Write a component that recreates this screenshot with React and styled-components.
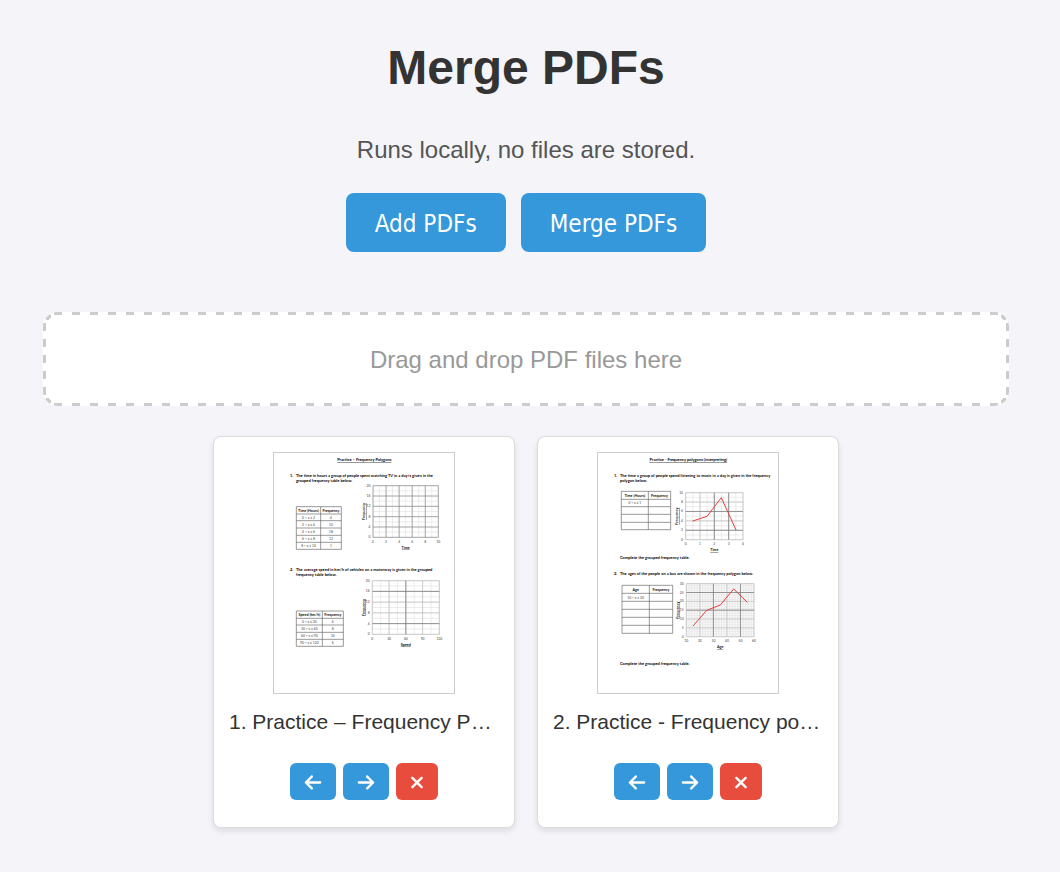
import React from "react";
import styled, { createGlobalStyle } from "styled-components";
import { FaArrowLeft, FaArrowRight, FaXmark } from "react-icons/fa6";

const GlobalStyle = createGlobalStyle`
  *, *::before, *::after { box-sizing: border-box; }
  body {
    margin: 0;
    background: #f4f4f9;
    color: #333;
    font-family: "Liberation Sans", Arial, sans-serif;
  }
`;

const Page = styled.main`
  display: flex;
  flex-direction: column;
  padding: 40px 51px 40px 43px;
`;

const Title = styled.h1`
  margin: 0 0 40px;
  font-size: 48px;
  line-height: 56px;
  text-align: center;
`;

const Tagline = styled.p`
  margin: 0 0 29px;
  color: #555;
  font-size: 24px;
  line-height: 28px;
  text-align: center;
`;

const Toolbar = styled.div`
  display: flex;
  justify-content: center;
  gap: 15px;
  margin-bottom: 60px;
`;

const Button = styled.button`
  display: inline-flex;
  align-items: center;
  justify-content: center;
  border: 0;
  color: #fff;
  background: ${(p) => (p.$danger ? "#e74c3c" : "#3498db")};
  cursor: pointer;
`;

const ActionButton = styled(Button)`
  padding: 15px 29px 11px;
  border-radius: 8px;
  font-family: "DejaVu Sans Condensed", Tahoma, "Noto Sans", sans-serif;
  font-size: 24px;
  line-height: 33px;
`;

/* One dash in the middle of a rounded corner: a wedge with its inner part covered. */
const cornerDash = (x, y, angle) => {
  const centre = `${x === "left" ? "100%" : "0%"} ${y === "top" ? "100%" : "0%"}`;
  return `
    radial-gradient(circle at ${centre}, #fff 12px, transparent 12px) ${x} ${y} / 15px 15px no-repeat,
    conic-gradient(from ${angle - 12}deg at ${centre}, #ccc 24deg, transparent 24deg) ${x} ${y} / 15px 15px no-repeat`;
};

const acrossDashes = (y) =>
  `linear-gradient(90deg, #ccc 8px, transparent 8px) 11px ${y} / 18px 3px repeat-x`;
const downDashes = (x) =>
  `linear-gradient(#ccc 8px, transparent 8px) ${x} 11px / 3px 16px repeat-y`;

const DropZone = styled.div`
  margin-bottom: 30px;
  padding: 34px 33px 32px;
  border-radius: 15px;
  background:
    ${cornerDash("left", "top", 315)},
    ${cornerDash("right", "top", 45)},
    ${cornerDash("right", "bottom", 135)},
    ${cornerDash("left", "bottom", 225)},
    ${acrossDashes("top")},
    ${acrossDashes("bottom")},
    ${downDashes("left")},
    ${downDashes("right")},
    #fff;
  color: #999;
  font-size: 24px;
  line-height: 28px;
  text-align: center;
`;

const FileList = styled.ul`
  display: flex;
  flex-wrap: wrap;
  justify-content: center;
  gap: 22px;
  margin: 0;
  padding: 0;
  list-style: none;
`;

const Card = styled.li`
  display: flex;
  flex-direction: column;
  align-items: center;
  width: 302px;
  padding: 15px 15px 27px;
  border: 1px solid #ddd;
  border-radius: 8px;
  background: #fff;
  box-shadow: 0 3px 6px rgba(0, 0, 0, 0.1);
`;

const Preview = styled.svg`
  display: block;
  width: 182px;
  height: 242px;
  border: 1px solid #ccc;
  font-family: Lato, sans-serif;
`;

const FileName = styled.div`
  width: 100%;
  margin: 16px 0 29px;
  overflow: hidden;
  font-size: 21px;
  line-height: 24px;
  text-overflow: ellipsis;
  white-space: nowrap;
`;

const Controls = styled.div`
  display: flex;
  gap: 7px;
`;

const IconButton = styled(Button)`
  padding: 10px 14px 8px;
  border-radius: 6px;
  svg {
    display: block;
    width: ${(p) => (p.$danger ? 14 : 18)}px;
    height: 19px;
  }
`;

const PlainText = styled.text`
  fill: #000;
  font-size: 12px;
  font-weight: 700;
`;

const SmallText = styled.text`
  fill: ${(p) => (p.$bold ? "#111" : "#444")};
  font-size: ${(p) => (p.$bold ? 11 : 10)}px;
  font-weight: ${(p) => (p.$bold ? 700 : 400)};
  text-anchor: ${(p) => p.$anchor || "middle"};
`;

function Grid({ cols, rows, cells }) {
  return (
    <g>
      <g stroke="#666" strokeWidth="2">
        {rows.map((y) => (
          <line key={y} x1={cols[0]} x2={cols[2]} y1={y} y2={y} />
        ))}
        {cols.map((x) => (
          <line key={x} x1={x} x2={x} y1={rows[0]} y2={rows[rows.length - 1]} />
        ))}
      </g>
      {cells.map((pair, r) =>
        pair.map((value, c) => (
          <SmallText
            key={`${r}-${c}`}
            $bold={r === 0}
            x={(cols[c] + cols[c + 1]) / 2}
            y={(rows[r] + rows[r + 1]) / 2 + 4}
          >
            {value}
          </SmallText>
        ))
      )}
    </g>
  );
}

function Chart({ box, xTicks, yTicks, split, darkX = [], darkY = [], majorColor, label, points }) {
  const [x0, y0, x1, y1] = box;
  const nx = xTicks.length - 1;
  const ny = yTicks.length - 1;
  const px = (i, n) => x0 + ((x1 - x0) * i) / n;
  const py = (i, n) => y0 + ((y1 - y0) * i) / n;
  const series = (n) => Array.from({ length: n + 1 }, (_, i) => i);
  const lines = (n, m, color, width, onlyX, onlyY) => (
    <g stroke={color} strokeWidth={width}>
      {series(n).filter((i) => !onlyX || onlyX.includes(i)).map((i) => (
        <line key={`x${i}`} x1={px(i, n)} x2={px(i, n)} y1={y0} y2={y1} />
      ))}
      {series(m).filter((i) => !onlyY || onlyY.includes(i)).map((i) => (
        <line key={`y${i}`} x1={x0} x2={x1} y1={py(i, m)} y2={py(i, m)} />
      ))}
    </g>
  );
  const midX = (x0 + x1) / 2;
  const midY = (y0 + y1) / 2;
  return (
    <g>
      {lines(nx * split, ny * split, "#e2e2e2", 2)}
      {lines(nx, ny, majorColor, 2)}
      {lines(nx, ny, "#777", 2, darkX, darkY)}
      {points && <polyline points={points} fill="none" stroke="#e83c3c" strokeWidth="3" />}
      {xTicks.map((t, i) => (
        <SmallText key={t} x={px(i, nx)} y={y1 + 17}>{t}</SmallText>
      ))}
      {yTicks.map((t, i) => (
        <SmallText key={t} $anchor="end" x={x0 - 8} y={py(i, ny) + 3}>{t}</SmallText>
      ))}
      <SmallText $bold x={midX} y={y1 + 34} textDecoration="underline">{label}</SmallText>
      <SmallText $bold transform={`translate(${x0 - 23} ${midY}) rotate(-90)`} textDecoration="underline">
        Frequency
      </SmallText>
    </g>
  );
}

function Prompt({ number, y, lines }) {
  return (
    <g>
      <PlainText x="60" y={y}>{`${number}.`}</PlainText>
      {lines.map((line, i) => (
        <PlainText key={line} x="78" y={y + i * 15}>{line}</PlainText>
      ))}
    </g>
  );
}

function PolygonsSheet() {
  return (
    <Preview viewBox="12 15 540 720" role="img" aria-label="Practice – Frequency Polygons">
      <PlainText x="283" y="39" textAnchor="middle" textDecoration="underline">Practice – Frequency Polygons</PlainText>
      <Prompt
        number={1}
        y={87}
        lines={[
          "The time in hours a group of people spent watching TV in a day is given in the",
          "grouped frequency table below.",
        ]}
      />
      <Grid
        cols={[79, 152, 214]}
        rows={[176, 198, 218, 240, 262, 283, 304]}
        cells={[["Time (Hours)", "Frequency"], ["0 < x ≤ 2", 4], ["2 < x ≤ 4", 10], ["4 < x ≤ 6", 18], ["6 < x ≤ 8", 12], ["8 < x ≤ 10", 1]]}
      />
      <Chart box={[309, 113, 505, 268]} xTicks={[0, 2, 4, 6, 8, 10]} yTicks={[20, 16, 12, 8, 4, 0]} split={2} majorColor="#888" label="Time" />
      <Prompt
        number={2}
        y={369}
        lines={[
          "The average speed in km/h of vehicles on a motorway is given in the grouped",
          "frequency table below.",
        ]}
      />
      <Grid
        cols={[79, 157, 220]}
        rows={[489, 511, 531, 553, 574, 595]}
        cells={[["Speed (km/h)", "Frequency"], ["0 < x ≤ 30", 6], ["30 < x ≤ 60", 8], ["60 < x ≤ 90", 14], ["90 < x ≤ 120", 6]]}
      />
      <Chart box={[307, 398, 508, 559]} xTicks={[0, 30, 60, 90, 120]} yTicks={[20, 16, 12, 8, 4, 0]} split={2} majorColor="#bbb" darkX={[2]} darkY={[1, 4]} label="Speed" />
    </Preview>
  );
}

function InterpretingSheet() {
  return (
    <Preview viewBox="12 15 540 720" role="img" aria-label="Practice - Frequency polygons (interpreting)">
      <PlainText x="283" y="39" textAnchor="middle" textDecoration="underline">Practice - Frequency polygons (interpreting)</PlainText>
      <Prompt
        number={1}
        y={87}
        lines={[
          "The time a group of people spend listening to music in a day is given in the frequency",
          "polygon below.",
        ]}
      />
      <Grid
        cols={[82, 163, 230]}
        rows={[130, 154, 176, 199, 223, 245]}
        cells={[["Time (Hours)", "Frequency"], ["0 < x ≤ 1", ""]]}
      />
      <Chart
        box={[275, 134, 447, 275]}
        xTicks={[0, 1, 2, 3, 4]}
        yTicks={[10, 8, 6, 4, 2, 0]}
        split={2}
        majorColor="#bbb"
        darkX={[2, 3]}
        darkY={[2, 4]}
        label="Time"
        points="296,219 339,205 382,149 426,246"
      />
      <PlainText x="78" y="333">Complete the grouped frequency table.</PlainText>
      <Prompt number={2} y={382} lines={["The ages of the people on a bus are shown in the frequency polygon below."]} />
      <Grid
        cols={[84, 166, 236]}
        rows={[412, 436, 460, 484, 508, 532, 556]}
        cells={[["Age", "Frequency"], ["10 < x ≤ 20", ""]]}
      />
      <Chart
        box={[277, 407, 480, 566]}
        xTicks={[10, 20, 30, 40, 50, 60]}
        yTicks={[30, 25, 20, 15, 10, 5, 0]}
        split={5}
        majorColor="#bbb"
        darkX={[2, 4]}
        darkY={[1, 3]}
        label="Age"
        points="297,534 338,487 379,471 419,423 460,463"
      />
      <PlainText x="78" y="652">Complete the grouped frequency table.</PlainText>
    </Preview>
  );
}

const files = [
  { name: "Practice – Frequency Polygons.pdf", Sheet: PolygonsSheet },
  { name: "Practice - Frequency polygons (interpreting).pdf", Sheet: InterpretingSheet },
];

export default function App() {
  return (
    <>
      <GlobalStyle />
      <Page>
        <Title>Merge PDFs</Title>
        <Tagline>Runs locally, no files are stored.</Tagline>
        <Toolbar>
          <ActionButton type="button">Add PDFs</ActionButton>
          <ActionButton type="button">Merge PDFs</ActionButton>
        </Toolbar>
        <DropZone>Drag and drop PDF files here</DropZone>
        <FileList>
          {files.map(({ name, Sheet }, i) => (
            <Card key={name}>
              <Sheet />
              <FileName>{`${i + 1}. ${name}`}</FileName>
              <Controls>
                <IconButton type="button" aria-label={`Move ${name} left`}><FaArrowLeft /></IconButton>
                <IconButton type="button" aria-label={`Move ${name} right`}><FaArrowRight /></IconButton>
                <IconButton type="button" $danger aria-label={`Remove ${name}`}><FaXmark /></IconButton>
              </Controls>
            </Card>
          ))}
        </FileList>
      </Page>
    </>
  );
}
